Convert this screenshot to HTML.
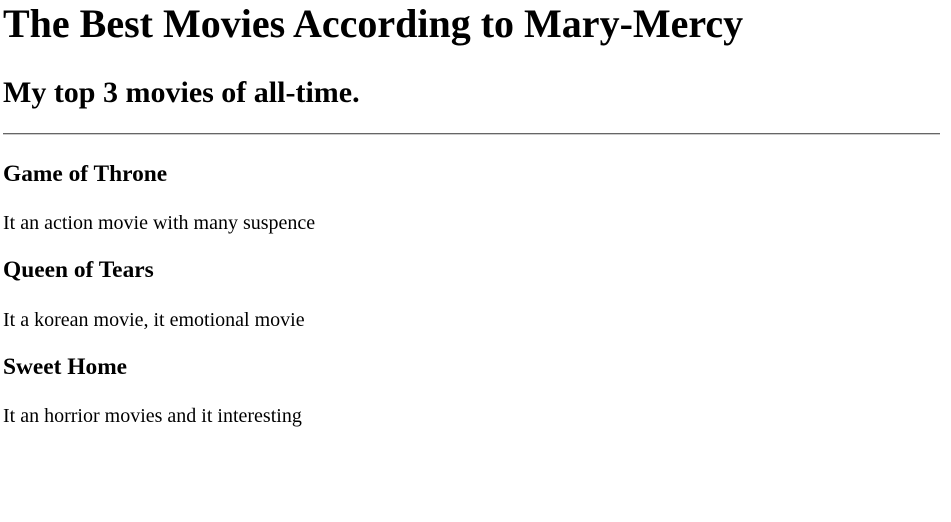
<!DOCTYPE html>
<html><head><meta charset="utf-8"><style>
html,body{margin:0;padding:0;background:#fff;width:951px;height:522px;overflow:hidden}
body{font-family:"Liberation Serif",serif;color:#000;position:relative}
.a{position:absolute;left:3px;margin:0;white-space:nowrap}
h1.a{font-size:40px;line-height:40px;top:4px;font-weight:bold}
h2.a{font-size:30px;line-height:30px;top:78px;font-weight:bold}
h3.a{font-size:23.4px;line-height:23px;font-weight:bold}
p.a{font-size:20px;line-height:20px}
hr{position:absolute;left:3px;width:937px;top:133px;margin:0;border:0;border-top:1px solid #666;border-bottom:1px solid #ccc;height:0}
</style></head><body>
<h1 class="a">The Best Movies According to Mary-Mercy</h1>
<h2 class="a">My top 3 movies of all-time.</h2>
<hr>
<h3 class="a" style="top:163px">Game of Throne</h3>
<p class="a" style="top:213px">It an action movie with many suspence</p>
<h3 class="a" style="top:259px">Queen of Tears</h3>
<p class="a" style="top:310px">It a korean movie, it emotional movie</p>
<h3 class="a" style="top:356px">Sweet Home</h3>
<p class="a" style="top:406px">It an horrior movies and it interesting</p>
</body></html>
